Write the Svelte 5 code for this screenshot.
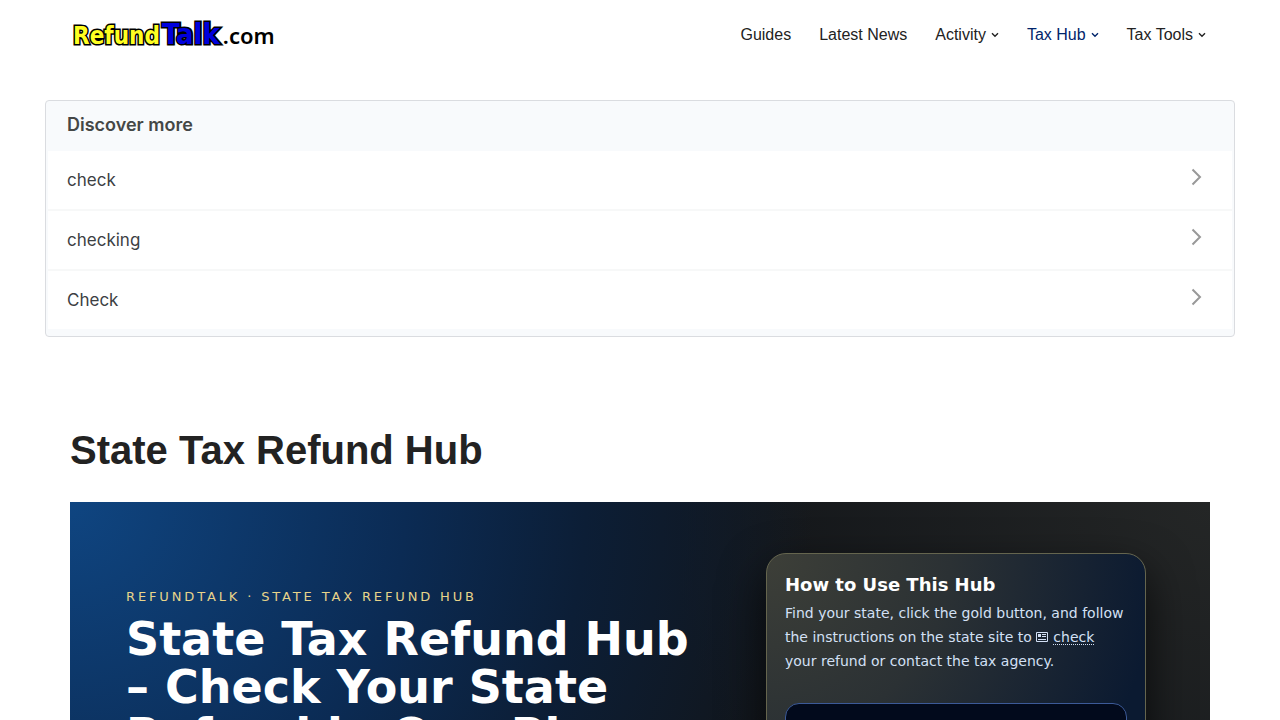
<script>
  const navItems = [
    { label: 'Guides' },
    { label: 'Latest News' },
    { label: 'Activity', menu: true },
    { label: 'Tax Hub', menu: true, active: true },
    { label: 'Tax Tools', menu: true }
  ];

  const related = ['check', 'checking', 'Check'];
</script>

<header class="site-header">
  <a href="/" class="logo" aria-label="RefundTalk.com">
    <span class="logo-refund">Refund</span><span class="logo-talk">Talk</span><span class="logo-com">.com</span>
  </a>
  <nav class="main-nav" aria-label="Main">
    {#each navItems as item}
      <a href="/" class:active={item.active}>
        {item.label}
        {#if item.menu}
          <svg class="caret" viewBox="0 0 8 6" aria-hidden="true">
            <path d="M1 1.2 4 4.2 7 1.2" />
          </svg>
        {/if}
      </a>
    {/each}
  </nav>
</header>

<section class="discover" aria-labelledby="discover-title">
  <h2 id="discover-title">Discover more</h2>
  <ul>
    {#each related as term}
      <li>
        <a href="/">
          <span>{term}</span>
          <svg viewBox="0 0 12 18" aria-hidden="true">
            <path d="M1.5 1.5 9 9l-7.5 7.5" />
          </svg>
        </a>
      </li>
    {/each}
  </ul>
</section>

<main>
  <h1>State Tax Refund Hub</h1>

  <section class="hero">
    <div class="hero-copy">
      <p class="eyebrow">RefundTalk · State Tax Refund Hub</p>
      <h2>State Tax Refund Hub – Check Your State Refund in One Place</h2>
    </div>

    <aside class="how-to">
      <h3>How to Use This Hub</h3>
      <p>
        Find your state, click the gold button, and follow the instructions on the state site to
        <svg viewBox="0 0 12 10" aria-hidden="true">
          <path class="frame" d="M.5.5h11v9H.5z" />
          <path class="fill" d="M2 2h3v3H2zM6 2h4v1H6zM6 4h4v1H6zM2 7h8v1H2z" />
        </svg><a href="/">check</a>
        your refund or contact the tax agency.
      </p>
      <div class="panel"></div>
    </aside>
  </section>
</main>

<style>
  :global(body) {
    margin: 0;
    background: #fff;
    color: #222;
    font-family: 'Liberation Sans', Arial, sans-serif;
  }

  .site-header {
    display: flex;
    align-items: center;
    justify-content: space-between;
    max-width: 1140px;
    height: 70px;
    margin: 0 auto;
  }

  .logo {
    display: flex;
    align-items: baseline;
    padding-left: 3px;
    font-family: 'Noto Sans', 'Open Sans', sans-serif;
    font-weight: 700;
    line-height: 40px;
    text-decoration: none;
    color: #000;
  }

  .logo-refund,
  .logo-talk {
    font-family: 'DejaVu Sans Condensed', 'Noto Sans', sans-serif;
    -webkit-text-stroke: 3px #000;
    paint-order: stroke fill;
  }

  .logo-refund {
    margin-right: 2px;
    font-size: 24px;
    color: #ff2;
  }

  .logo-talk {
    margin-right: 3px;
    font-size: 29px;
    color: #00d;
  }

  .logo-com {
    font-size: 22px;
    font-weight: 600;
  }

  .main-nav {
    display: flex;
    gap: 28px;
    padding-right: 4px;
  }

  .main-nav a {
    display: flex;
    align-items: center;
    gap: 5px;
    color: #222;
    font-size: 16px;
    line-height: 24px;
    text-decoration: none;
  }

  .main-nav a.active {
    color: #00246b;
  }

  .caret {
    width: 8px;
    height: 6px;
    fill: none;
    stroke: currentColor;
    stroke-width: 1.4;
  }

  .discover {
    box-sizing: border-box;
    max-width: 1190px;
    margin: 30px auto 0;
    padding-bottom: 7px;
    border: 1px solid #dadce0;
    border-radius: 4px;
    background: #f8fafc;
    color: #3c4043;
    font-family: Inter, Roboto, sans-serif;
    overflow: hidden;
  }

  .discover h2 {
    margin: 0;
    padding: 12px 21px 14px;
    font-size: 18px;
    font-weight: 600;
    line-height: 24px;
    color: #444746;
  }

  .discover ul {
    margin: 0;
    padding: 0 2px;
    list-style: none;
  }

  .discover li {
    background: #fff;
  }

  .discover li + li {
    border-top: 2px solid #f7f8f8;
  }

  .discover li a {
    display: flex;
    align-items: center;
    justify-content: space-between;
    height: 58px;
    padding: 0 29px 0 19px;
    color: inherit;
    font-size: 17px;
    text-decoration: none;
  }

  .discover svg {
    width: 12px;
    height: 18px;
    margin-bottom: 6px;
    fill: none;
    stroke: #999;
    stroke-width: 2;
  }

  main {
    max-width: 1140px;
    margin: 0 auto;
  }

  h1 {
    margin: 88px 0 27px;
    font-size: 40px;
    font-weight: 700;
    line-height: 50px;
  }

  .hero {
    display: grid;
    grid-template-columns: minmax(0, 1fr) 380px;
    gap: 60px;
    padding: 51px 64px 56px 56px;
    background:
      radial-gradient(circle at top left, #0f4581 0, #0b2b54 28%, #0c1e36 43%, transparent 62%),
      radial-gradient(circle at top right, #242626 0, #121519 45%);
    font-family: 'DejaVu Sans', sans-serif;
  }

  .hero-copy {
    padding-top: 34px;
  }

  .eyebrow {
    margin: 0 0 8px;
    color: #e8d48a;
    font-size: 13px;
    line-height: 20px;
    letter-spacing: 0.22em;
    text-transform: uppercase;
  }

  .hero h2 {
    margin: 0;
    color: #fff;
    font-size: 46px;
    font-weight: 700;
    line-height: 48px;
  }

  .how-to {
    padding: 19px 18px;
    border: 1px solid #65654e;
    border-radius: 20px;
    background: radial-gradient(circle at top left, #3d3f38 0, #2b3134 40%, #0b1a31 85%);
    box-shadow: 0 18px 45px rgba(0, 0, 0, 0.7);
  }

  .how-to h3 {
    margin: 0 0 4px;
    color: #fff;
    font-size: 18px;
    font-weight: 700;
    line-height: 24px;
  }

  .how-to p {
    margin: 0 0 30px;
    color: #d3e0f5;
    font-size: 14px;
    line-height: 24px;
  }

  .how-to a {
    color: inherit;
    text-decoration: underline dotted 1px;
    text-underline-offset: 2px;
    text-decoration-skip-ink: none;
  }

  .how-to svg {
    width: 12px;
    height: 10px;
    margin-right: 5px;
  }

  .frame {
    fill: none;
    stroke: currentColor;
    stroke-width: 1;
  }

  .fill {
    fill: currentColor;
  }

  .panel {
    height: 90px;
    border: 1px solid #3c5a98;
    border-radius: 14px;
    background: #020a1c;
  }
</style>
